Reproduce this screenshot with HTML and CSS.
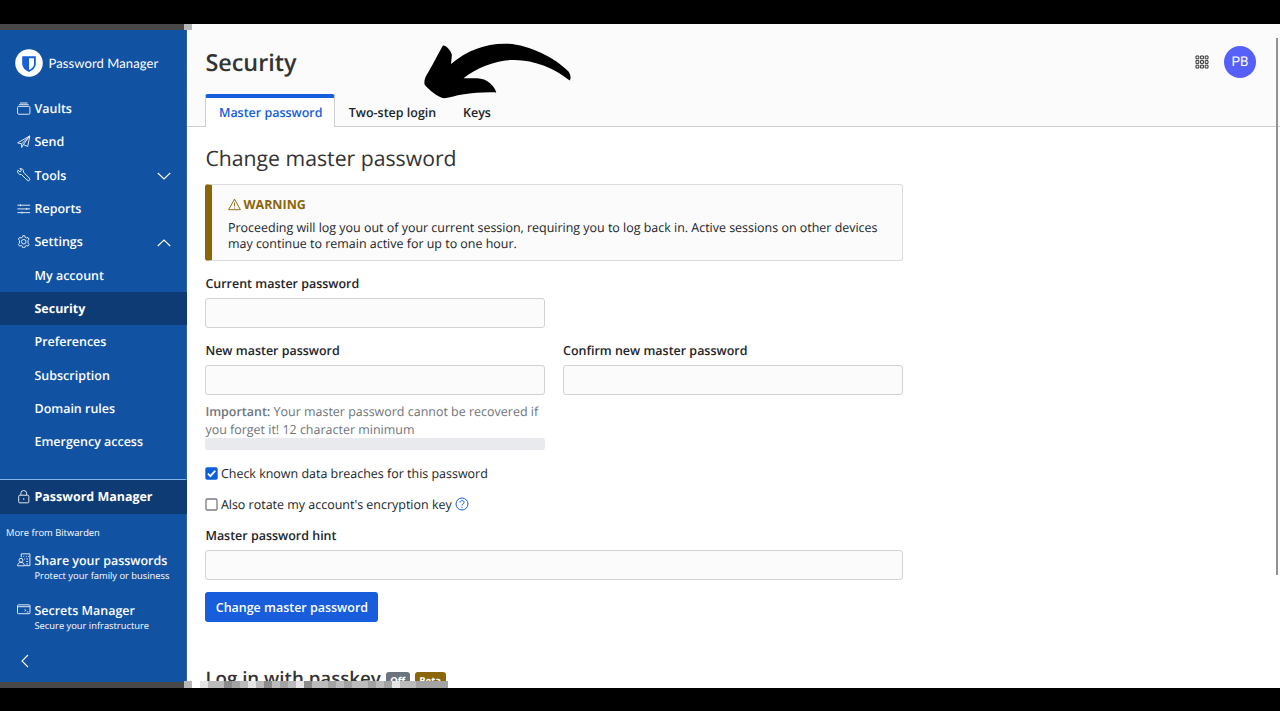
FILE: index.html
```html
<!DOCTYPE html>
<html lang="en">
<head>
<meta charset="utf-8">
<title>Security | Bitwarden Web Vault</title>
<link rel="stylesheet" href="styles.css">
</head>
<body>
<div class="window">
  <aside class="sidebar">
    <div class="strip"></div>
    <div class="brand">
      <svg class="brand-logo" viewBox="0 0 28 28"><circle cx="14" cy="14" r="13.8" fill="#fff"/><path d="M7.200 7.200h13.600v7.400c0 4.200-3.200 6.700-6.800 8.500-3.600-1.800-6.800-4.300-6.800-8.500z" fill="#175ddc"/><path d="M14 9.200h5v5.700c0 2.700-2.200 4.600-5 6.100z" fill="#fff"/></svg>
      <span class="brand-name">Password Manager</span>
    </div>
    <nav class="nav">
      <a class="item"><svg class="icon" viewBox="0 0 16 16"><path d="M3.500 1.200h9M2.200 3.200h11.600"/><rect x=".7" y="5.200" width="14.600" height="9.300" rx="1.300"/></svg><span>Vaults</span></a>
      <a class="item"><svg class="icon" viewBox="0 0 16 16"><path d="M.8 9.300 15.200 1.100 12.700 13.600 7.600 11.300 5.500 14.800V10.500zM5.500 10.500 15 1.200 7.600 11.300"/></svg><span>Send</span></a>
      <a class="item"><svg class="icon" viewBox="0 0 16 16"><path d="M1 2.300 3.500 4.700 5 3.500 4.700 1.300 3.300.9C6 .1 8.300 2 7.700 5L14.600 12a1.700 1.700 0 0 1-2.500 2.600L5.300 7.700C2.500 8.400.1 6 .7 3M12.500 13h.6"/></svg><span>Tools</span><svg class="chev" viewBox="0 0 14 8"><path d="M.8 1 7 7l6.200-6"/></svg></a>
      <a class="item"><svg class="icon" viewBox="0 0 16 16"><path d="M.5 3.800h15M.5 8.200h15M.5 12.600h15M4 2.600V5M11.500 7v2.400M6 11.400v2.400"/></svg><span>Reports</span></a>
      <a class="item"><svg class="icon" viewBox="0 0 16 16"><circle cx="8" cy="8" r="2.700"/><path d="M6.400 2.700 6.900.8h2.200l.5 1.900 1.500.8 1.900-.6 1.300 1.900-1.200 1.500v3.400l1.200 1.500-1.300 1.900-1.900-.6-1.500.8-.5 1.900H6.900l-.5-1.900-1.500-.8-1.900.6-1.300-1.900 1.200-1.500V6.300L1.700 4.800 3 2.900l1.900.6z"/></svg><span>Settings</span><svg class="chev" viewBox="0 0 14 8"><path d="M.8 7 7 1l6.200 6"/></svg></a>
      <a class="item sub">My account</a>
      <a class="item sub active">Security</a>
      <a class="item sub">Preferences</a>
      <a class="item sub">Subscription</a>
      <a class="item sub">Domain rules</a>
      <a class="item sub">Emergency access</a>
    </nav>
    <div class="products">
      <a class="item active product"><svg class="icon" viewBox="0 0 16 16"><rect x="2" y="6.200" width="12" height="9" rx="1.200"/><path d="M4.600 6V4a3.400 3.400 0 0 1 6.800 0v2M8 9.700v2"/></svg><span>Password Manager</span></a>
      <div class="more">More from Bitwarden</div>
      <a class="promo"><svg class="icon" viewBox="0 0 16 16"><path d="M5 5V1h10.300v14H9M7.500 4h1m2 0h1m1.500 0h1M8.500 7h1m1.500 0h2M11 10h2M11 13h2"/><circle cx="4.700" cy="8.600" r="2.300"/><path d="M.7 15.200c0-5.500 8-5.500 8 0z"/></svg><span><b>Share your passwords</b><small>Protect your family or business</small></span></a>
      <a class="promo"><svg class="icon" viewBox="0 0 16 16"><rect x=".6" y="2.200" width="14.800" height="10.500" rx="1"/><path d="M.8 4.400h14.500M9 7.600l1.500 1L9 9.800M11.500 10.600h2"/></svg><span><b>Secrets Manager</b><small>Secure your infrastructure</small></span></a>
    </div>
    <svg class="collapse" viewBox="0 0 8 14"><path d="M7 1 1 7l6 6"/></svg>
    <div class="strip"></div>
  </aside>
  <main class="main">
    <header class="header">
      <div class="topbar">
        <h1>Security</h1>
        <svg class="grid-icon" viewBox="0 0 14 14"><path d="M1 1h2.800v2.800H1zM5.600 1h2.800v2.800H5.600zM10.200 1H13v2.800h-2.800zM1 5.600h2.800v2.800H1zM5.600 5.600h2.800v2.800H5.600zM10.200 5.600H13v2.800h-2.800zM1 10.200h2.800V13H1zM5.600 10.200h2.800V13H5.600zM10.200 10.200H13V13h-2.800z"/></svg>
        <div class="avatar">PB</div>
      </div>
      <div class="tabs"><a class="tab selected">Master password</a><a class="tab">Two-step login</a><a class="tab">Keys</a></div>
    </header>
    <section class="content">
      <h2>Change master password</h2>
      <div class="callout">
        <div class="callout-title"><svg viewBox="0 0 14 14"><path d="M7 1.200 13.300 12.600H.7zM7 5v4M7 10.300v1"/></svg>WARNING</div>
        <p>Proceeding will log you out of your current session, requiring you to log back in. Active sessions on other devices<br>may continue to remain active for up to one hour.</p>
      </div>
      <div class="field half"><label>Current master password</label><div class="input"></div></div>
      <div class="row">
        <div class="field"><label>New master password</label><div class="input"></div>
          <p class="help"><b>Important:</b> Your master password cannot be recovered if<br>you forget it! 12 character minimum</p><div class="meter"></div></div>
        <div class="field"><label>Confirm new master password</label><div class="input"></div></div>
      </div>
      <div class="check"><svg class="box" viewBox="0 0 13 13"><rect x=".3" y=".3" width="12.400" height="12.400" rx="1.800" fill="#0b5fdb"/><path d="m2.900 6.700 2.500 2.500 4.900-5.500" fill="none" stroke="#fff" stroke-width="1.800"/></svg><span>Check known data breaches for this password</span></div>
      <div class="check"><svg class="box" viewBox="0 0 13 13"><rect x="1" y="1" width="11" height="11" rx="1.200" fill="#fff" stroke="#7b7b82" stroke-width="1.300"/></svg><span>Also rotate my account's encryption key</span><svg class="question" viewBox="0 0 14 14"><circle cx="7" cy="7" r="6"/><path d="M5 5.500c0-2.600 4.100-2.500 4.100-.1C9.100 7 7 6.900 7 8.600M7 9.800v1"/></svg></div>
      <div class="field hint"><label>Master password hint</label><div class="input"></div></div>
      <button class="button">Change master password</button>
      <div class="passkey"><h3>Log in with passkey</h3><span class="badge off">Off</span><span class="badge beta">Beta</span></div>
    </section>
  </main>
  <i class="corner top"></i><i class="corner bottom"></i>
  <svg class="mosaic" viewBox="0 0 248 7" preserveAspectRatio="none"><path fill="#bbb" d="M0 0h248v7H0z"/><path fill="#e5e5e5" d="M0 0h8v7H0zM48 0h8v7h-8zM96 0h8v7h-8zM192 0h8v7h-8z"/><path fill="#8c8c8c" d="M24 0h8v7h-8zM64 0h8v7h-8zM104 0h8v7h-8z"/><path fill="#a3a3a3" d="M32 0h8v7h-8zM80 0h8v7h-8zM128 0h8v7h-8zM144 0h8v7h-8zM168 0h8v7h-8zM184 0h8v7h-8zM216 0h32v7h-32z"/></svg>
  <div class="scrollbar"></div>
  <svg class="arrow" viewBox="0 0 150 60"><path d="M22.800 5.700C25 4.800 31 10 31.900 15L31 24C47 10 67 3 87 3.700c22 .8 48 14 61.500 27.800 2.200 3 2.700 7 1.200 8.900C134 28 113 19 91 20c-17 1-34 8-47.500 18.200C52 38.500 61 37 67 41c5 3 8 7 9.300 11.500-11-.5-22 .4-34 2-6 .8-12 3.100-18 3.700C18 58 8.500 49 4.800 45c-1.300-4 .5-8 3-12C13 24 18 14 22.800 5.700z"/></svg>
</div>
</body>
</html>
```
FILE: styles.css
```css
* { box-sizing: border-box; }
body { margin: 0; height: 711px; padding: 24px 0 23px; background: #000; overflow: hidden; font: 12.480px/20px "Open Sans", "Noto Sans", sans-serif; color: #212529; text-rendering: geometricPrecision; }
h1, h2, h3, p { margin: 0; }
svg { fill: none; stroke: currentColor; flex: none; }
.window { position: relative; display: flex; height: 664px; background: #fff; overflow: hidden; }
.sidebar { width: 187px; flex: none; display: flex; flex-direction: column; background: #1252a3; color: #fff; border-right: 1px solid #37619b; }
.strip { height: 6px; flex: none; background: #484848; margin-right: -1px; }
.brand { height: 62px; display: flex; align-items: center; gap: 5.500px; padding: 4px 0 0 15px; }
.brand-logo { width: 28px; height: 28px; stroke: none; }
.brand-name { font: 13px/20px Lato, sans-serif; letter-spacing: .1px; white-space: nowrap; }
.item { height: 33.330px; display: flex; align-items: center; padding: 0.500px 0 0 17px; font-weight: 600; white-space: nowrap; }
.icon { width: 13.500px; height: 13.500px; margin: -1px 4px 0 0; stroke-width: 1.150; opacity: .9; }
.chev { width: 14px; height: 8px; margin: 1px 15px 0 auto; stroke-width: 1.100; }
.sub { padding-left: 34.500px; }
.active { background: #0f3b75; margin-right: -1px; font-weight: 700; }
.products { margin-top: 20.500px; border-top: 1.500px solid #83b5e6; }
.product { height: 33.500px; padding-top: 0; }
.product .icon { margin-top: 0; }
.more { font-size: 9.350px; padding: 9px 6px 9px; }
.promo { height: 50px; display: flex; padding-left: 17px; white-space: nowrap; }
.promo .icon { margin-top: 1.500px; }
.promo b { display: block; font-weight: 600; line-height: 17px; }
.promo small { display: block; font-size: 9.350px; line-height: 14px; }
.collapse { width: 8px; height: 14px; margin: 2px 0 auto 21px; stroke-width: 1.100; }
.main { flex: 1; min-width: 0; }
.header { height: 103px; background: #fbfbfb; border-bottom: 1px solid #cfcfd1; padding-left: 18.400px; }
.topbar { height: 70px; display: flex; align-items: center; padding: 6px 24px 0 0; }
h1 { font-size: 23.400px; line-height: 32px; font-weight: 600; color: #333; margin-right: auto; }
.grid-icon { width: 14px; height: 14px; color: #333; margin-right: .5px; }
.avatar { width: 32px; height: 32px; margin: -1px 0 0 15px; border-radius: 50%; background: #5660f8; color: #fff; display: flex; align-items: center; justify-content: center; font: 13.500px Roboto, sans-serif; }
.tabs { display: flex; }
.tab { height: 33px; padding: 9px 13.400px 0; font-weight: 600; }
.selected { width: 130px; border: 1px solid #cfcfd1; border-top: 4px solid #175ddc; border-bottom: 0; border-radius: 3px 3px 0 0; background: #fff; color: #175ddc; padding: 5px 12.500px 0; white-space: nowrap; }
.content { padding: 17px 0 0 18.400px; width: 716px; }
h2 { font-size: 21.230px; line-height: 30px; font-weight: 400; color: #333; }
.callout { width: 697.500px; height: 77px; margin-top: 10px; padding: 10px 0 0 15.600px; border: 1px solid #d9dcde; border-left: 7px solid #8b6609; border-radius: 3px; background: #fbfbfb; }
.callout-title { display: flex; gap: 2.500px; font-weight: 700; line-height: 19px; color: #8b6609; }
.callout-title svg { width: 13px; height: 13px; margin-top: 3px; }
.callout p { font-size: 12.460px; line-height: 16px; margin-top: 6px; white-space: nowrap; }
.field { width: 339.600px; }
label { display: block; font-weight: 600; line-height: 20px; padding-top: 1px; }
.input { height: 30px; margin-top: 4px; border: 1px solid #d0d2d4; border-radius: 3px; background: #fbfbfb; }
.half { margin-top: 12px; }
.row { display: flex; gap: 18px; margin-top: 12px; }
.help { color: #6f757b; line-height: 18.500px; margin-top: 7.500px; white-space: nowrap; }
.help b { font-weight: 600; }
.meter { height: 12px; margin-top: -1.500px; border-radius: 3px; background: #e9eaed; }
.check { display: flex; align-items: center; height: 20px; margin-top: 11px; }
.check span { padding-top: 1px; }
.row + .check { margin-top: 13px; }
.box { width: 13px; height: 13px; margin-right: 2.500px; stroke: none; }
.question { width: 14px; height: 14px; margin-left: 3px; color: #175ddc; }
.hint { width: 697.500px; margin-top: 11px; }
.button { display: block; width: 173px; height: 30px; margin-top: 12px; padding: 1px 0 0; border: 0; border-radius: 3px; background: #175ddc; color: #fff; font: 600 12.480px/20px "Open Sans", sans-serif; }
.passkey { display: flex; margin-top: 44px; height: 30px; }
h3 { font-size: 18.700px; line-height: 26px; font-weight: 600; margin-right: 5px; color: #333; white-space: nowrap; }
.badge { height: 18px; margin: 6px 5px 0 0; padding: 0 4.500px; border-radius: 3px; font-size: 9.500px; line-height: 17px; font-weight: 700; color: #fff; }
.off { background: #6c757d; }
.beta { background: #8b6609; }
.corner { position: absolute; left: 184px; width: 8px; height: 6px; background: #b8b8ba; }
.top { top: 0; }
.bottom { bottom: 0; height: 7px; }
.mosaic { position: absolute; left: 200px; bottom: 0; width: 248px; height: 7px; stroke: none; }
.scrollbar { position: absolute; right: 2px; top: 14px; width: 2px; height: 537px; background: #929292; }
.arrow { position: absolute; left: 420px; top: 16px; width: 150px; height: 60px; fill: #000; stroke: none; overflow: visible; }
```
